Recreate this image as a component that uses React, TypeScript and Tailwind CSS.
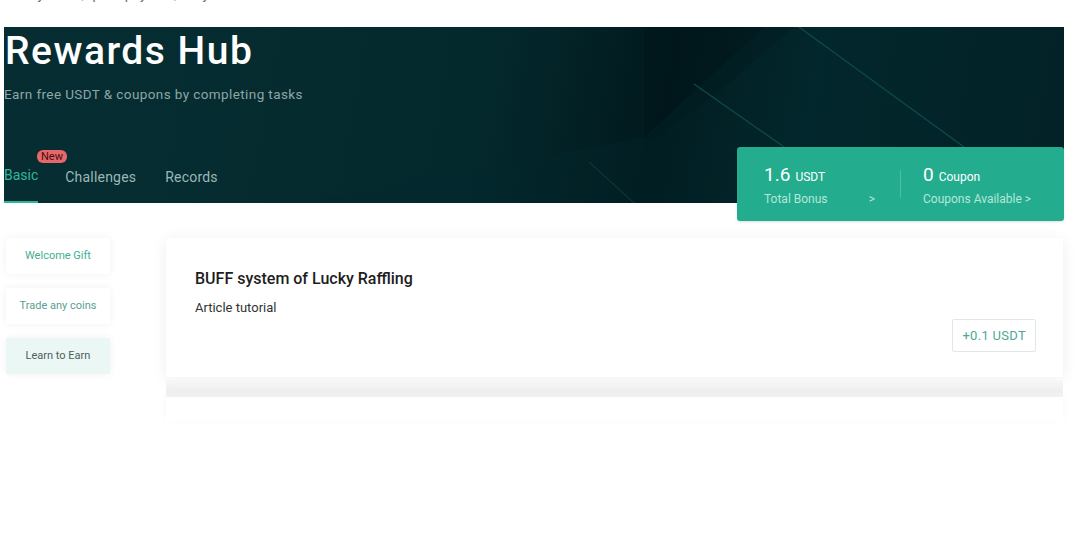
import React from 'react';

const menu = [
  { label: 'Welcome Gift', color: 'text-[#3fae94]', bg: 'bg-white' },
  { label: 'Trade any coins', color: 'text-[#5a9e95]', bg: 'bg-white' },
  { label: 'Learn to Earn', color: 'text-[#4d5e5c]', bg: 'bg-[#ebf7f4]' },
];

export default function App() {
  return (
    <div className="w-[1080px] h-[557px] bg-white overflow-hidden font-['Roboto',sans-serif]">
      {/* cut off line on top */}
      <div className="h-[27px] overflow-hidden">
        <p className="-mt-[16px] pl-[14px] text-[14px] text-[#6b6b6b] leading-[20px]">
          Daily tasks, quick payouts, easy rewards
        </p>
      </div>

      {/* BANNER */}
      <div className="relative ml-[4px] w-[1060px] h-[176px] bg-[linear-gradient(100deg,#062e32_0%,#04292d_45%,#01191d_62%,#03272b_75%,#021f24_100%)]">
        <svg className="absolute inset-0" width="1060" height="176" viewBox="0 0 1060 176">
          <polygon points="640,0 790,0 720,60 640,120" fill="#011418" opacity="0.45" />
          <polygon points="300,176 640,110 760,0 1060,0 1060,176" fill="#03292d" opacity="0.35" />
          <line x1="795" y1="0" x2="960" y2="120" stroke="#0f4a4c" strokeWidth="1.2" />
          <line x1="690" y1="57" x2="860" y2="176" stroke="#0f4a4c" strokeWidth="1.2" />
          <line x1="585" y1="135" x2="630" y2="176" stroke="#0d4345" strokeWidth="1" />
        </svg>

        <div className="relative flex flex-col h-full">
          <h1 className="text-white text-[39px] leading-[46px] font-medium tracking-[1.5px] pt-[1px] pl-[1px]">
            Rewards Hub
          </h1>
          <p className="mt-[12px] text-[13.5px] text-[#8fa6a6] leading-[16px] tracking-[0.4px]">
            Earn free USDT &amp; coupons by completing tasks
          </p>

          <div className="mt-auto flex items-end">
            <div className="relative flex flex-col">
              <span className="absolute -top-[16px] left-[33px] rounded-[6px] bg-[#e5676a] px-[4px] text-[11px] leading-[13px] text-[#4a0d0f]">
                New
              </span>
              <span className="text-[14px] text-[#35b59c] leading-[18px] pb-[17px]">Basic</span>
              <div className="h-[2px] w-[34px] bg-[#2fb59b]" />
            </div>
            <span className="ml-[27px] text-[14px] text-[#9db7b5] leading-[18px] pb-[17px] tracking-[0.2px]">Challenges</span>
            <span className="ml-[29px] text-[14px] text-[#9db7b5] leading-[18px] pb-[17px] tracking-[0.2px]">Records</span>
          </div>
        </div>

        {/* STATS */}
        <div className="absolute left-[733px] top-[120px] w-[327px] h-[74px] rounded-[3px] bg-[#23ad8e] flex items-center shadow-sm">
          <div className="w-[163px] pl-[27px] pt-[3px]">
            <div className="text-white leading-[22px]">
              <span className="text-[19px]">1.6</span>
              <span className="text-[12px] ml-[5px]">USDT</span>
            </div>
            <div className="flex justify-between pr-[25px] text-[12px] text-[#b6e6da] mt-[2px]">
              <span>Total Bonus</span>
              <span>&gt;</span>
            </div>
          </div>
          <div className="w-px h-[28px] bg-[#4cbfa3]" />
          <div className="pl-[22px] pt-[3px]">
            <div className="text-white leading-[22px]">
              <span className="text-[19px]">0</span>
              <span className="text-[12px] ml-[5px]">Coupon</span>
            </div>
            <div className="text-[12px] text-[#b6e6da] mt-[2px]">Coupons Available &gt;</div>
          </div>
        </div>
      </div>

      {/* CONTENT */}
      <div className="flex pt-[35px] pl-[6px]">
        <div className="w-[104px] flex flex-col gap-[14px]">
          {menu.map((m) => (
            <div
              key={m.label}
              className={`${m.bg} h-[36px] flex items-center justify-center text-[11px] ${m.color} shadow-[0_0_8px_rgba(0,0,0,0.06)]`}
            >
              {m.label}
            </div>
          ))}
        </div>

        <div className="ml-[56px] w-[897px] flex flex-col">
          <div className="h-[139px] bg-white shadow-[0_2px_14px_rgba(0,0,0,0.07)] pl-[29px] pr-[27px] pt-[31px] flex flex-col">
            <h3 className="text-[16px] font-medium text-[#1d1d1d] leading-[20px]">
              BUFF system of Lucky Raffling
            </h3>
            <p className="mt-[11px] text-[13px] text-[#333] leading-[16px]">Article tutorial</p>
            <div className="flex justify-end mt-[3px]">
              <div className="h-[33px] px-[9px] flex items-center border border-[#e2e6e5] rounded-[2px] text-[13px] text-[#4da796] tracking-[0.3px]">
                +0.1 USDT
              </div>
            </div>
          </div>
          <div className="h-[17px] bg-[linear-gradient(180deg,#f7f7f7,#efefef_60%,#f6f6f6)] mt-[3px]" />
          <div className="h-[24px] bg-white shadow-[0_-2px_8px_rgba(0,0,0,0.04)]" />
        </div>
      </div>
    </div>
  );
}
